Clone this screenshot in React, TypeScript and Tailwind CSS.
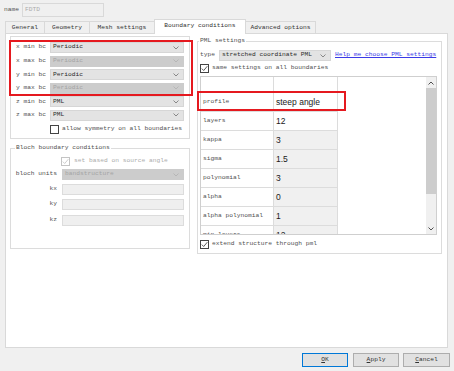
import React from "react";

const bcRows = [
  { label: "x min bc", value: "Periodic", disabled: false },
  { label: "x max bc", value: "Periodic", disabled: true },
  { label: "y min bc", value: "Periodic", disabled: false },
  { label: "y max bc", value: "Periodic", disabled: true },
  { label: "z min bc", value: "PML", disabled: false },
  { label: "z max bc", value: "PML", disabled: false },
];

const pmlRows = [
  { name: "profile", value: "steep angle", shaded: false },
  { name: "layers", value: "12", shaded: false },
  { name: "kappa", value: "3", shaded: true },
  { name: "sigma", value: "1.5", shaded: true },
  { name: "polynomial", value: "3", shaded: true },
  { name: "alpha", value: "0", shaded: true },
  { name: "alpha polynomial", value: "1", shaded: true },
  { name: "min layers", value: "12", shaded: true },
];

const tabs = ["General", "Geometry", "Mesh settings", "Boundary conditions", "Advanced options"];
const tabWidths = ["w-[40px]", "w-[46px]", "w-[66px]", "w-[92px]", "w-[71px]"];

const Chevron = ({ disabled }: { disabled?: boolean }) => (
  <svg width="6" height="4" viewBox="0 0 6 4" className="shrink-0">
    <path d="M0.5 0.5 L3 3 L5.5 0.5" fill="none" stroke={disabled ? "#b0b0b0" : "#707070"} strokeWidth="0.8" />
  </svg>
);

const Combo = ({ value, disabled, className }: { value: string; disabled?: boolean; className: string }) => (
  <div
    className={`flex items-center justify-between h-[11px] px-[2px] pr-[4px] border ${
      disabled ? "bg-[#cccccc] border-[#cccccc] text-[#a4a4a4]" : "bg-[#e3e3e3] border-[#d6d6d6] text-[#2a2a2a]"
    } ${className}`}
  >
    <span className="leading-none">{value}</span>
    <Chevron disabled={disabled} />
  </div>
);

const Check = ({ checked, disabled }: { checked?: boolean; disabled?: boolean }) => (
  <div
    className={`w-[9px] h-[9px] shrink-0 border bg-white flex items-center justify-center ${
      disabled ? "border-[#c4c4c4]" : "border-[#444]"
    }`}
  >
    {checked && (
      <svg width="7" height="7" viewBox="0 0 7 7">
        <path d="M0.8 3.6 L2.7 5.5 L6.3 1.2" fill="none" stroke={disabled ? "#c0c0c0" : "#333"} strokeWidth="0.8" />
      </svg>
    )}
  </div>
);

const Button = ({ label, rest, active, className }: { label: string; rest: string; active?: boolean; className: string }) => (
  <div
    className={`h-[14px] flex items-center justify-center bg-[#e1e1e1] border ${
      active ? "border-[#0078d7]" : "border-[#adadad]"
    } ${className}`}
  >
    <span className="leading-none text-[#333]">
      <span className="underline">{label}</span>
      {rest}
    </span>
  </div>
);

export default function App() {
  return (
    <div className="w-[454px] h-[371px] bg-[#f0f0f0] relative overflow-hidden font-['Liberation_Mono','DejaVu_Sans_Mono',monospace] text-[6.25px] text-[#505050] flex flex-col">
      {/* name row */}
      <div className="h-[19px] flex items-start pt-[3px] pl-[4px]">
        <span className="w-[18px] leading-[14px]">name</span>
        <div className="w-[82px] h-[14px] border border-[#d9d9d9] bg-[#f0f0f0] flex items-center pl-[2px] text-[#ababab]">
          FDTD
        </div>
      </div>

      {/* tabs */}
      <div className="h-[14px] flex items-end pl-[5px]">
        {tabs.map((t, i) =>
          i === 3 ? (
            <div
              key={t}
              className={`${tabWidths[i]} h-[15px] -mb-px -ml-px relative z-10 bg-white border border-b-0 border-[#d9d9d9] flex items-center justify-center pb-[2px] text-[#333]`}
            >
              {t}
            </div>
          ) : (
            <div
              key={t}
              className={`${tabWidths[i]} h-[12px] ${i === 0 ? "" : "-ml-px"} bg-[#f0f0f0] border border-b-0 border-[#d9d9d9] flex items-center justify-center text-[#333]`}
            >
              {t}
            </div>
          )
        )}
      </div>

      {/* panel */}
      <div className="ml-[5px] w-[443px] h-[315px] bg-white border border-[#d9d9d9] flex items-start pl-[4px] pt-[2px]">
        {/* left column */}
        <div className="w-[180px] flex flex-col">
          <div className="h-[103px] border border-[#dcdcdc] pt-[5px] flex flex-col gap-[2.6px]">
            {bcRows.map((r) => (
              <div key={r.label} className="flex items-center h-[11px]">
                <span className="w-[35px] text-right leading-none">{r.label}</span>
                <Combo value={r.value} disabled={r.disabled} className="ml-[4px] w-[134px]" />
              </div>
            ))}
            <div className="flex items-center h-[11px] pl-[39px]">
              <Check />
              <span className="ml-[3px] leading-none">allow symmetry on all boundaries</span>
            </div>
          </div>

          <div className="mt-[9px] h-[101px] border border-[#dcdcdc] relative pt-[7px] flex flex-col">
            <span className="absolute left-[4px] -top-[5px] h-[8px] leading-[8px] bg-white px-[1px]">
              Bloch boundary conditions
            </span>
            <div className="flex items-center h-[11px] pl-[50px]">
              <Check checked disabled />
              <span className="ml-[4px] leading-none text-[#ababab]">set based on source angle</span>
            </div>
            <div className="flex items-center h-[11px] mt-[2px]">
              <span className="w-[46px] text-right leading-none">bloch units</span>
              <Combo value="bandstructure" disabled className="ml-[5px] w-[122px]" />
            </div>
            {["kx", "ky", "kz"].map((k, i) => (
              <div key={k} className={`flex items-center h-[11px] ${i === 0 ? "mt-[3.5px]" : i === 1 ? "mt-[4px]" : "mt-[5px]"}`}>
                <span className="w-[46px] text-right leading-none">{k}</span>
                <div className="ml-[5px] w-[122px] h-[11px] bg-[#efefef] border border-[#dcdcdc]" />
              </div>
            ))}
          </div>
        </div>

        {/* right column */}
        <div className="ml-[7px] mt-[5px] w-[245px] h-[213px] border border-[#dcdcdc] relative pl-[2px] pt-[8px] flex flex-col">
          <span className="absolute left-[1px] -top-[5px] h-[8px] leading-[8px] bg-white px-[1px]">PML settings</span>

          <div className="flex items-center h-[11px]">
            <span className="w-[19px] leading-none">type</span>
            <Combo value="stretched coordinate PML" className="w-[112px]" />
            <span className="ml-[4px] leading-none text-[#3a3ae6] underline">Help me choose PML settings</span>
          </div>

          <div className="flex items-center h-[9px] mt-[3px]">
            <Check checked />
            <span className="ml-[3px] leading-none">same settings on all boundaries</span>
          </div>

          <div className="mt-[3px] w-[237px] h-[159px] border border-[#cfcfcf] flex overflow-hidden">
            <div className="flex-1 flex flex-col bg-white">
              <div className="h-[16px] shrink-0 flex border-b border-[#dcdcdc] w-[137px]">
                <div className="w-[73px] border-r border-[#dcdcdc]" />
                <div className="w-[64px] border-r border-[#dcdcdc]" />
              </div>
              {pmlRows.map((r) => (
                <div key={r.name} className="h-[19px] shrink-0 flex border-b border-[#dcdcdc] w-[137px]">
                  <div className="w-[73px] border-r border-[#dcdcdc] flex items-center pl-[2px] leading-none">{r.name}</div>
                  <div
                    className={`w-[64px] border-r border-[#dcdcdc] flex items-center pl-[2px] font-['Liberation_Sans',Arial,sans-serif] text-[8.5px] text-[#1a1a1a] ${
                      r.shaded ? "bg-[#f0f0f0]" : "bg-white"
                    }`}
                  >
                    {r.value}
                  </div>
                </div>
              ))}
            </div>
            <div className="w-[10px] bg-[#f0f0f0] flex flex-col">
              <div className="h-[11px] flex items-center justify-center">
                <svg width="6" height="4" viewBox="0 0 6 4">
                  <path d="M0.5 3.5 L3 1 L5.5 3.5" fill="none" stroke="#505050" strokeWidth="1" />
                </svg>
              </div>
              <div className="h-[106px] bg-[#cdcdcd]" />
              <div className="flex-1" />
              <div className="h-[11px] flex items-center justify-center">
                <svg width="6" height="4" viewBox="0 0 6 4">
                  <path d="M0.5 0.5 L3 3 L5.5 0.5" fill="none" stroke="#505050" strokeWidth="1" />
                </svg>
              </div>
            </div>
          </div>

          <div className="flex items-center h-[9px] mt-[5px]">
            <Check checked />
            <span className="ml-[3px] leading-none">extend structure through pml</span>
          </div>
        </div>
      </div>

      {/* buttons */}
      <div className="mt-[5px] flex justify-end pr-[4px]">
        <Button label="O" rest="K" active className="w-[46px]" />
        <Button label="A" rest="pply" className="w-[46px] ml-[5px]" />
        <Button label="C" rest="ancel" className="w-[47px] ml-[4px]" />
      </div>

      {/* red annotation boxes */}
      <div className="absolute left-[9px] top-[40px] w-[184px] h-[56px] border-2 border-[#e5191f] pointer-events-none" />
      <div className="absolute left-[197px] top-[91px] w-[149px] h-[20px] border-2 border-[#e5191f] pointer-events-none" />
    </div>
  );
}
